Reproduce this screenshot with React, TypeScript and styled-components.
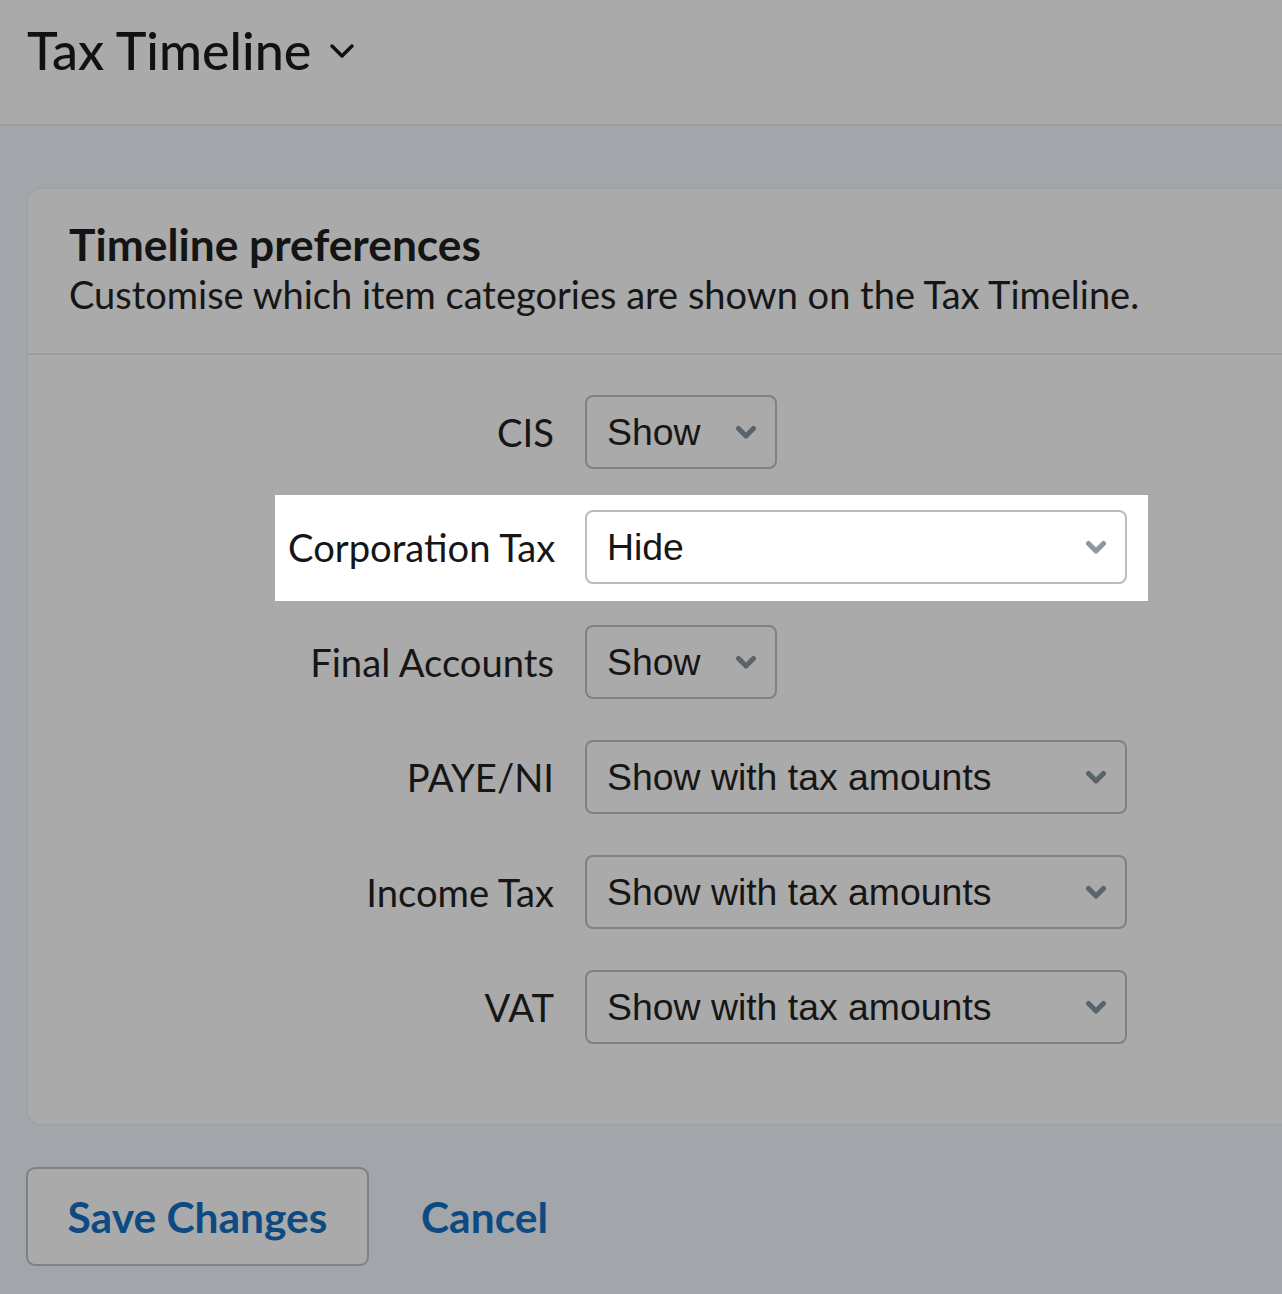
import styled, { createGlobalStyle } from "styled-components";

const GlobalStyle = createGlobalStyle`
  html, body {
    margin: 0;
    padding: 0;
    background: #a2a5aa;
  }
  body {
    font-family: "Lato", "Noto Sans", sans-serif;
    color: #141414;
    overflow: hidden;
  }
`;

const Page = styled.div`
  width: 1282px;
  height: 1294px;
  background: #a2a5aa;
  overflow: hidden;
`;

const TopBar = styled.header`
  height: 126px;
  background: #aaaaaa;
  border-bottom: 2px solid #9c9da1;
  display: flex;
  align-items: flex-start;
  padding: 21px 0 0 27px;
  box-sizing: border-box;
  gap: 18px;
`;

const PageTitle = styled.h1`
  margin: 0;
  font-size: 52px;
  font-weight: 500;
  color: #111111;
  line-height: 58px;
`;

const TitleChevron = styled.svg`
  margin-top: 20px;
  width: 26px;
  height: 20px;
`;

const Main = styled.main`
  padding: 61px 0 0 26px;
`;

const Card = styled.section`
  background: #aaaaaa;
  border: 2px solid #9ea1a6;
  border-right: none;
  border-radius: 16px 0 0 16px;
  width: 1300px;
  box-sizing: border-box;
`;

const CardHead = styled.div`
  padding: 30px 40px 34px 41px;
  border-bottom: 2px solid #9c9ca3;
`;

const CardTitle = styled.h2`
  margin: 0;
  font-size: 44.3px;
  font-weight: 700;
  line-height: 50px;
  color: #141414;
`;

const CardSub = styled.p`
  margin: 0;
  font-size: 38px;
  line-height: 50px;
  color: #161616;
`;

const Rows = styled.div`
  display: flex;
  flex-direction: column;
  gap: 41px;
  padding: 40px 0 80px 260px;
`;

const Row = styled.div<{ $lit?: boolean }>`
  display: grid;
  grid-template-columns: 266px auto;
  column-gap: 31px;
  align-items: center;
  width: fit-content;
  ${(p) =>
    p.$lit &&
    `
    background: #ffffff;
    padding: 15px 21px 17px 13px;
    margin: -15px 0 -17px -13px;
  `}
`;

const Label = styled.label`
  text-align: right;
  font-size: 38.2px;
  color: #161616;
  white-space: nowrap;
`;

const Select = styled.div<{ $wide?: boolean; $lit?: boolean }>`
  box-sizing: border-box;
  height: 74px;
  width: ${(p) => (p.$wide ? "542px" : "192px")};
  border: 2px solid ${(p) => (p.$lit ? "#b6bdc5" : "#7d8286")};
  border-radius: 8px;
  background: ${(p) => (p.$lit ? "#ffffff" : "transparent")};
  display: flex;
  align-items: center;
  justify-content: space-between;
  padding: 0 18px 0 20px;
  font-family: "Liberation Sans", Arial, sans-serif;
  font-size: 37.4px;
  color: #161616;
`;

const Caret = styled.svg<{ $lit?: boolean }>`
  width: 22px;
  height: 16px;
  color: ${(p) => (p.$lit ? "#8c979f" : "#58636a")};
`;

const Actions = styled.div`
  display: flex;
  align-items: center;
  gap: 52px;
  padding-top: 41px;
`;

const SaveButton = styled.button`
  box-sizing: border-box;
  width: 343px;
  height: 99px;
  border: 2px solid #7d8286;
  border-radius: 9px;
  background: #aaaaaa;
  font-family: "Lato", "Noto Sans", sans-serif;
  font-size: 42.5px;
  font-weight: 700;
  color: #0e4a82;
  cursor: pointer;
  padding: 0;
`;

const CancelLink = styled.a`
  font-size: 42.5px;
  font-weight: 700;
  color: #0e4a82;
  text-decoration: none;
`;

const Chevron = ({ lit }: { lit?: boolean }) => (
  <Caret $lit={lit} viewBox="0 0 22 16">
    <path d="M3.5 4.5 L11 12 L18.5 4.5" fill="none" stroke="currentColor" strokeWidth="5" strokeLinecap="round" strokeLinejoin="round" />
  </Caret>
);

const prefs = [
  { label: "CIS", value: "Show" },
  { label: "Corporation Tax", value: "Hide", lit: true },
  { label: "Final Accounts", value: "Show" },
  { label: "PAYE/NI", value: "Show with tax amounts" },
  { label: "Income Tax", value: "Show with tax amounts" },
  { label: "VAT", value: "Show with tax amounts" },
];

export default function App() {
  return (
    <Page>
      <GlobalStyle />
      <TopBar>
        <PageTitle>Tax Timeline</PageTitle>
        <TitleChevron viewBox="0 0 26 20">
          <path d="M3 5 L13 15 L23 5" fill="none" stroke="#111" strokeWidth="3.5" strokeLinecap="round" strokeLinejoin="round" />
        </TitleChevron>
      </TopBar>
      <Main>
        <Card>
          <CardHead>
            <CardTitle>Timeline preferences</CardTitle>
            <CardSub>Customise which item categories are shown on the Tax Timeline.</CardSub>
          </CardHead>
          <Rows>
            {prefs.map((p) => (
              <Row key={p.label} $lit={p.lit}>
                <Label>{p.label}</Label>
                <Select $wide={p.value !== "Show"} $lit={p.lit}>
                  <span>{p.value}</span>
                  <Chevron lit={p.lit} />
                </Select>
              </Row>
            ))}
          </Rows>
        </Card>
        <Actions>
          <SaveButton>Save Changes</SaveButton>
          <CancelLink href="#">Cancel</CancelLink>
        </Actions>
      </Main>
    </Page>
  );
}
